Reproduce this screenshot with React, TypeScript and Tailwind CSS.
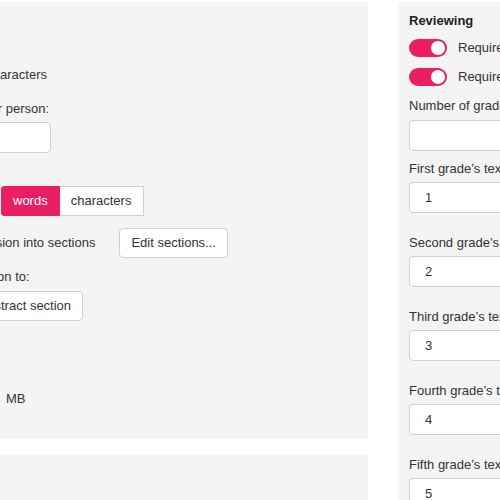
import React from "react";

function Toggle() {
  return (
    <div className="relative w-[38px] h-[18px] shrink-0 rounded-full bg-[#e91e63]">
      <span className="absolute right-[2px] top-[2px] w-[14px] h-[14px] rounded-full bg-white" />
    </div>
  );
}

function GradeField({ label, value, first }: { label: string; value: string; first?: boolean }) {
  return (
    <div className={first ? "mt-[10px]" : "mt-[22px]"}>
      <div className="leading-4 whitespace-nowrap">{label}</div>
      <div className="mt-[5px] h-[31px] w-[260px] rounded-[4px] border border-[#cfcfcf] bg-white pl-[15px] flex items-center">
        {value}
      </div>
    </div>
  );
}

export default function App() {
  return (
    <div className="w-[500px] h-[500px] overflow-hidden bg-white text-[13px] leading-4 text-[#333] font-['Liberation_Sans',Arial,sans-serif]">
      <div className="flex gap-[30px] pt-[2px] -ml-[162px]">
        <div className="flex flex-col w-[530px] shrink-0">
          <div className="h-[437px] bg-[#f4f4f4] pl-[11px] pt-[11px]">
            <h2 className="font-bold text-[#222] leading-4">Submission</h2>
            <div className="mt-[38px] leading-4 whitespace-nowrap">Limit length in words or characters</div>
            <div className="mt-[18px] leading-4 whitespace-nowrap">Min number of reviews per person:</div>
            <div className="mt-[5px] h-[31px] w-[202px] rounded-[4px] border border-[#cfcfcf] bg-white" />
            <div className="mt-[33px] flex items-center gap-3 h-[30px]">
              <span className="w-[140px] whitespace-nowrap">Count length in:</span>
              <div className="flex h-[30px]">
                <button className="h-[30px] px-[11px] rounded-l-[3px] bg-[#e91e63] text-white border border-[#e91e63]">words</button>
                <button className="h-[30px] pl-[11px] pr-[12px] bg-white border border-l-0 border-[#cfcfcf] text-[#333]">characters</button>
              </div>
            </div>
            <div className="mt-[12px] flex items-center gap-[24px] h-[30px]">
              <span className="whitespace-nowrap">Let users split the submission into sections</span>
              <button className="h-[30px] px-[11px] rounded-[4px] bg-white border border-[#cfcfcf] whitespace-nowrap">Edit sections...</button>
            </div>
            <div className="mt-[11px] leading-4 whitespace-nowrap">Limit reviews for submission to:</div>
            <div className="mt-[6px] flex gap-1 h-[30px]">
              <button className="h-[30px] px-[11px] rounded-[4px] bg-white border border-[#cfcfcf] whitespace-nowrap">Full submission</button>
              <button className="h-[30px] px-[11px] rounded-[4px] bg-white border border-[#cfcfcf] whitespace-nowrap">Abstract section</button>
            </div>
            <div className="mt-[32px] leading-4 whitespace-nowrap">Max file size:</div>
            <div className="mt-[14px] flex items-center gap-2 h-[31px]">
              <div className="h-[31px] w-[149px] rounded-[4px] border border-[#cfcfcf] bg-white" />
              <span>MB</span>
            </div>
          </div>
          <div className="mt-[16px] h-[100px] bg-[#f4f4f4]" />
        </div>
        <div className="w-[300px] shrink-0 h-[520px] bg-[#f4f4f4] pl-[11px] pt-[11px]">
          <h2 className="font-bold text-[#222] leading-4">Reviewing</h2>
          <div className="mt-[10px] flex items-center gap-[11px] h-[18px]">
            <Toggle />
            <span className="whitespace-nowrap">Require reviewers to give grades</span>
          </div>
          <div className="mt-[11px] flex items-center gap-[11px] h-[18px]">
            <Toggle />
            <span className="whitespace-nowrap">Require reviewers to write comments</span>
          </div>
          <div className="mt-[12px] leading-4 whitespace-nowrap">Number of grades:</div>
          <div className="mt-[6px] h-[31px] w-[260px] rounded-[4px] border border-[#cfcfcf] bg-white" />
          <GradeField first label="First grade’s text" value="1" />
          <GradeField label="Second grade’s text" value="2" />
          <GradeField label="Third grade’s text" value="3" />
          <GradeField label="Fourth grade’s text" value="4" />
          <GradeField label="Fifth grade’s text" value="5" />
        </div>
      </div>
    </div>
  );
}
